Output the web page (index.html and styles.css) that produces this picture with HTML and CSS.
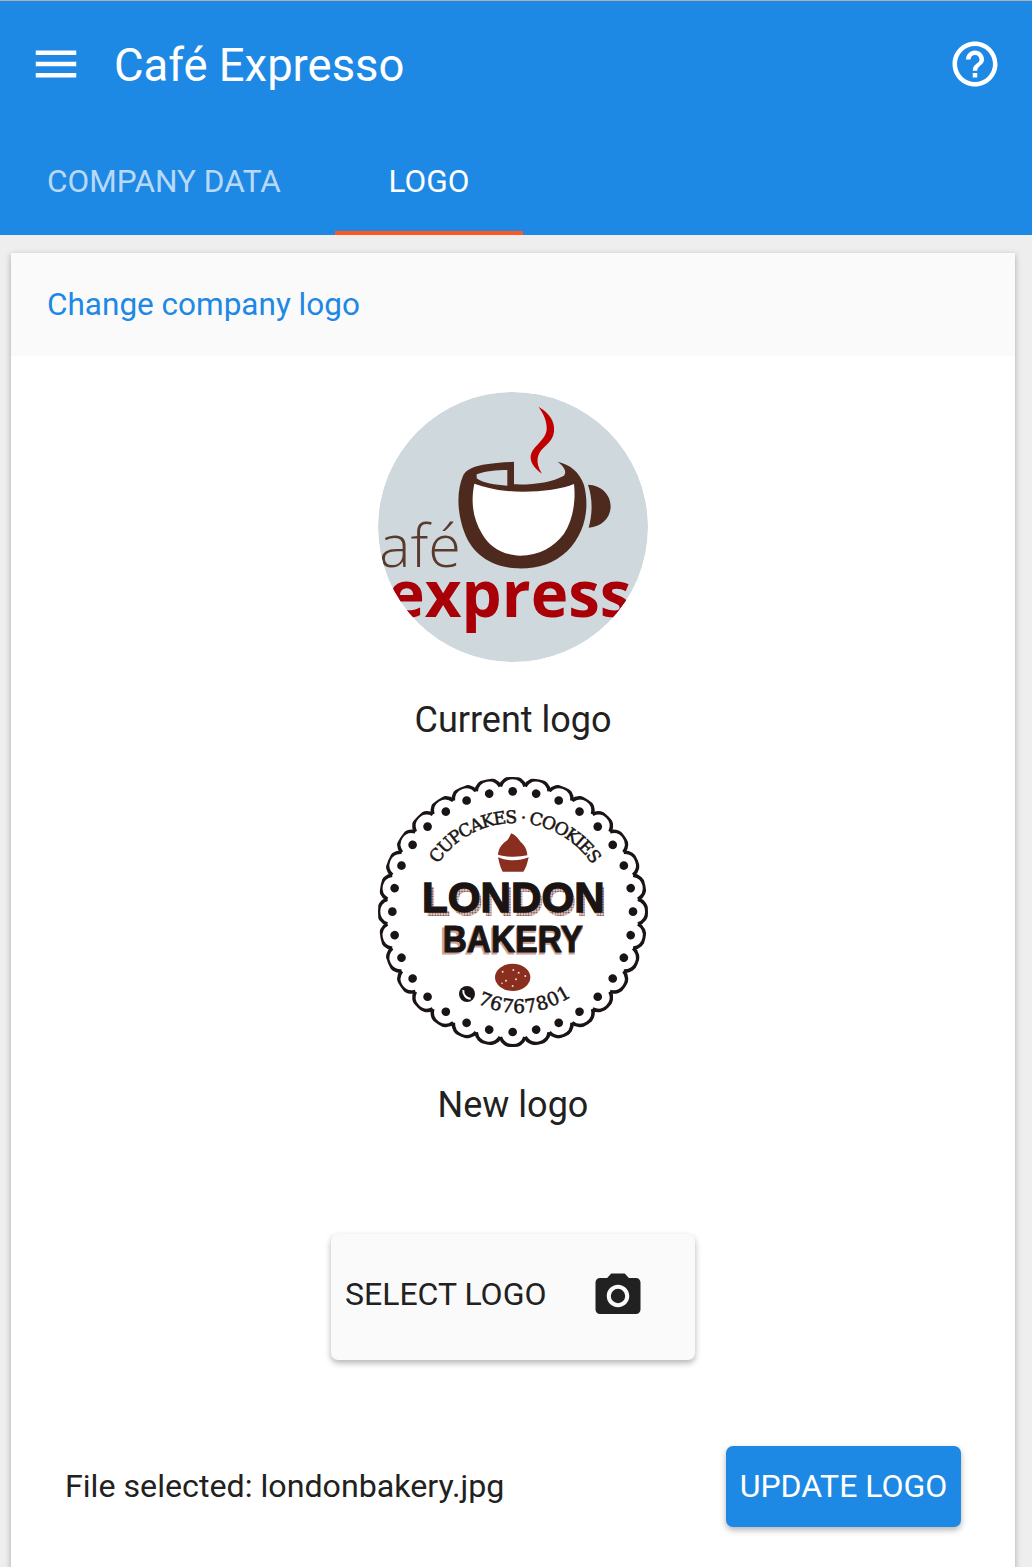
FILE: index.html
```html
<!DOCTYPE html>
<html lang="en">
<head>
<meta charset="utf-8">
<title>Café Expresso</title>
<link rel="stylesheet" href="styles.css">
</head>
<body>
<div class="page">
  <header class="appbar">
    <div class="toolbar">
      <svg class="icon" viewBox="0 0 24 24"><path d="M3 18h18v-2H3v2zm0-5h18v-2H3v2zm0-7v2h18V6H3z"/></svg>
      <h1 class="title">Café Expresso</h1>
      <svg class="icon help" viewBox="0 0 24 24"><path d="M11 18h2v-2h-2v2zm1-16C6.48 2 2 6.48 2 12s4.48 10 10 10 10-4.48 10-10S17.52 2 12 2zm0 18c-4.41 0-8-3.59-8-8s3.59-8 8-8 8 3.59 8 8-3.59 8-8 8zm0-14c-2.21 0-4 1.79-4 4h2c0-1.1.9-2 2-2s2 .9 2 2c0 2-3 1.75-3 5h2c0-2.25 3-2.5 3-5 0-2.21-1.79-4-4-4z"/></svg>
    </div>
    <nav class="tabs">
      <a class="tab tab-data">COMPANY DATA</a>
      <a class="tab tab-logo">LOGO</a>
    </nav>
  </header>

  <main class="card">
    <div class="card-head">Change company logo</div>
    <div class="card-body">
      <svg class="logo" viewBox="24 21 810 810">
        <defs><clipPath id="round"><circle cx="429" cy="426" r="405"/></clipPath></defs>
        <g clip-path="url(#round)">
          <rect x="24" y="21" width="810" height="810" fill="#cfd8dc"/>
          <path fill="#c00000" d="M505 65C540 85 555 110 552 140C548 170 525 180 512 198C498 218 500 240 516 266C490 250 476 225 484 205C494 180 526 165 530 135C532 110 520 85 505 65Z"/>
          <path fill="#4e2a1e" d="M432 230L432 298C490 300 545 292 582 272C590 262 585 245 562 230C600 238 628 260 642 300C660 370 645 445 592 498C550 538 500 552 440 550C370 547 308 512 283 442C262 385 258 320 280 270C295 245 330 235 432 230Z"/>
          <path fill="#cfd8dc" d="M320 268C345 258 380 255 412 255L412 302C375 300 340 295 320 280Z"/>
          <path fill="#fff" d="M313 296C345 307 375 314 412 318C480 325 570 315 612 297C618 350 608 408 582 446C552 486 508 511 450 512C400 510 358 486 336 446C308 400 302 350 313 296Z"/>
          <path fill="#4e2a1e" d="M654 299C695 300 722 330 722 364C722 398 695 426 656 428C668 385 668 340 654 299Z"/>
          <text class="cafe" x="27" y="545">afé</text>
          <text class="expresso" x="52" y="695" textLength="850" lengthAdjust="spacingAndGlyphs">expresso</text>
        </g>
      </svg>
      <p class="caption">Current logo</p>

      <svg class="logo logo-new" viewBox="24 21 810 810">
        <defs>
          <g id="s1"><path d="M-37-376A39 39 0 0 1 37-376" fill="none" stroke="#1a1514" stroke-width="11"/><circle cx="0" cy="-361" r="13" fill="#1a1514"/></g>
          <g id="s2"><use href="#s1"/><use href="#s1" transform="rotate(11.25)"/></g>
          <g id="s4"><use href="#s2"/><use href="#s2" transform="rotate(22.5)"/></g>
          <g id="s8"><use href="#s4"/><use href="#s4" transform="rotate(45)"/></g>
          <g id="s16"><use href="#s8"/><use href="#s8" transform="rotate(90)"/></g>
          <pattern id="dots" width="8" height="8" patternUnits="userSpaceOnUse"><rect width="8" height="8" fill="#eadbd6"/><circle cx="4" cy="4" r="3" fill="#7a3a30"/></pattern>
          <path id="arc-top" d="M203 282A279 279 0 0 1 672 292"/>
          <path id="arc-bottom" d="M322 700Q470 770 615 672"/>
        </defs>
        <rect x="24" y="21" width="810" height="810" fill="#fff"/>
        <g transform="translate(428 425)"><use href="#s16"/><use href="#s16" transform="rotate(180)"/></g>
        <text class="arc-text"><textPath href="#arc-top" textLength="548" lengthAdjust="spacing">CUPCAKES · COOKIES</textPath></text>
        <path fill="#8a2f20" d="M384 254C386 232 398 220 410 212C418 205 420 196 424 190C438 196 446 208 452 216C464 226 472 240 472 256C445 262 412 262 384 254Z"/>
        <path fill="#8a2f20" d="M384 262C412 274 448 274 476 262C472 280 468 295 460 305L398 305C392 295 388 280 384 262Z"/>
        <text class="london-shadow" x="165" y="439" textLength="545" lengthAdjust="spacingAndGlyphs">LONDON</text>
        <text class="london" x="156" y="427" textLength="548" lengthAdjust="spacingAndGlyphs">LONDON</text>
        <text class="bakery-shadow" x="211" y="553" textLength="428" lengthAdjust="spacingAndGlyphs">BAKERY</text>
        <text class="bakery" x="218" y="546" textLength="421" lengthAdjust="spacingAndGlyphs">BAKERY</text>
        <ellipse cx="428" cy="622" rx="53" ry="41" fill="#8a2f20"/>
        <g fill="#f0dcc8"><circle cx="398" cy="605" r="3"/><circle cx="430" cy="600" r="3"/><circle cx="446" cy="608" r="3"/><circle cx="408" cy="632" r="3"/><circle cx="438" cy="628" r="3"/><circle cx="428" cy="648" r="3"/><circle cx="466" cy="618" r="3"/><circle cx="396" cy="640" r="2.5"/></g>
        <circle cx="291" cy="672" r="24" fill="#1a1514"/>
        <path d="M280 660C278 672 288 686 302 686" fill="none" stroke="#fff" stroke-width="6"/>
        <text class="phone-text"><textPath href="#arc-bottom" textLength="298" lengthAdjust="spacing">76767801</textPath></text>
      </svg>
      <p class="caption caption-new">New logo</p>

      <button class="select-btn" type="button">
        <span>SELECT LOGO</span>
        <svg class="camera" viewBox="0 0 24 24"><circle cx="12" cy="12" r="3.2"/><path d="M9 2 7.17 4H4c-1.1 0-2 .9-2 2v12c0 1.1.9 2 2 2h16c1.1 0 2-.9 2-2V6c0-1.1-.9-2-2-2h-3.17L15 2H9zm3 15c-2.76 0-5-2.24-5-5s2.24-5 5-5 5 2.24 5 5-2.24 5-5 5z"/></svg>
      </button>

      <div class="file-row">
        <span class="file-name">File selected: londonbakery.jpg</span>
        <button class="update-btn" type="button">UPDATE LOGO</button>
      </div>
    </div>
  </main>
</div>
</body>
</html>
```

FILE: styles.css
```css
* { box-sizing: border-box; }
html, body { margin: 0; padding: 0; }
body { font-family: Roboto, "Liberation Sans", sans-serif; background: #eeeeee; color: #212121; }
.page { width: 1032px; height: 1567px; overflow: hidden; background: #eeeeee; }

.appbar { height: 235px; background: #1e88e5; border-top: 1px solid #b0b0b0; color: #fff; }
.toolbar { display: flex; align-items: center; height: 126px; padding: 0 30px 0 29px; }
.icon { width: 54px; height: 54px; fill: #fff; flex: none; }
.title { margin: 0 0 0 31px; padding-top: 4px; font-size: 45.4px; font-weight: 400; line-height: 54px; flex: 1; }
.tabs { display: flex; height: 108px; }
.tab { display: flex; align-items: center; justify-content: center; height: 108px; font-size: 31.5px; font-weight: 400; }
.tab-data { width: 328px; margin-right: 7px; color: rgba(255,255,255,.7); }
.tab-logo { width: 188px; color: #fff; box-shadow: inset 0 -4px 0 #ff5722; }

.card { margin: 18px 17px 0 11px; height: 1400px; background: #fff; box-shadow: 0 2px 6px rgba(0,0,0,.3); }
.card-head { height: 103px; padding: 0 36px; display: flex; align-items: center; background: #fafafa; color: #1e88e5; font-size: 31.5px; }
.card-body { display: flex; flex-direction: column; align-items: center; padding-top: 36px; }
.logo { display: block; width: 270px; height: 270px; border-radius: 50%; flex: none; }
.logo-new { margin-top: 30px; }
.caption { margin: 31px 0 0; height: 54px; line-height: 54px; font-size: 36px; text-align: center; }
.caption-new { margin-top: 31px; }

.select-btn { display: flex; align-items: flex-start; width: 364px; height: 126px; margin-top: 102px; padding: 33px 0 0 14px; border: 0; border-radius: 7px; background: #fafafa; color: #212121; font-family: inherit; font-size: 32px; box-shadow: 0 3px 6px rgba(0,0,0,.3); }
.select-btn span { line-height: 54px; }
.camera { width: 54px; height: 54px; fill: #212121; margin-left: 45px; margin-top: 2px; flex: none; }

.file-row { display: flex; align-items: center; justify-content: space-between; width: 100%; margin-top: 86px; padding: 0 54px; }
.file-name { font-size: 32.2px; margin-bottom: 2px; }
.update-btn { width: 235px; height: 81px; padding: 0 0 2px; border: 0; border-radius: 7px; background: #1e88e5; color: #fff; font-family: inherit; font-size: 32px; box-shadow: 0 3px 6px rgba(0,0,0,.3); }

.cafe { font-family: "Open Sans", sans-serif; font-weight: 300; font-size: 178px; fill: #5b3a2e; }
.expresso { font-family: "Open Sans", sans-serif; font-weight: 700; font-size: 196px; fill: #a90008; }
.arc-text { font-family: "DejaVu Serif", serif; font-size: 52px; fill: #1a1514; stroke: #1a1514; stroke-width: 1.5; }
.phone-text { font-family: "DejaVu Serif", serif; font-size: 56px; fill: #1a1514; stroke: #1a1514; stroke-width: 1.5; }
.london, .london-shadow, .bakery, .bakery-shadow { font-family: "Liberation Sans", sans-serif; font-weight: 700; }
.london, .london-shadow { font-size: 130px; }
.bakery, .bakery-shadow { font-size: 110px; }
.london { fill: #1a1514; stroke: #1a1514; stroke-width: 4; }
.london-shadow { fill: url(#dots); }
.bakery { fill: #1a1514; stroke: #1a1514; stroke-width: 3; }
.bakery-shadow { fill: #c9a196; stroke: #c9a196; stroke-width: 3; }
```
